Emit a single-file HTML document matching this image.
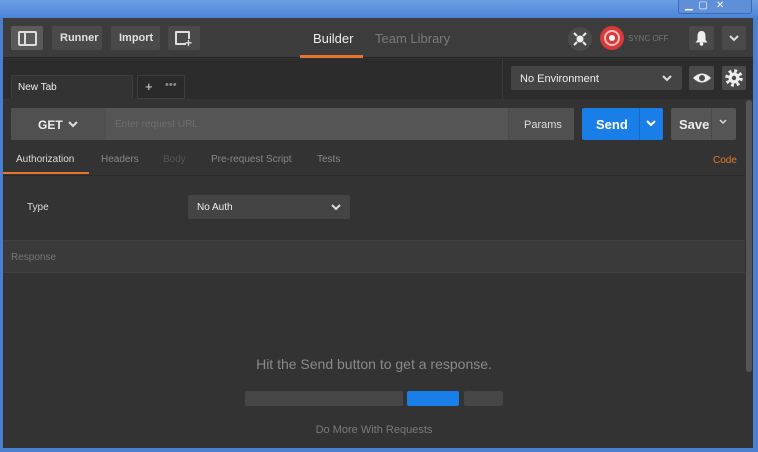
<!DOCTYPE html>
<html><head><style>
*{margin:0;padding:0;box-sizing:border-box}
body{width:758px;height:452px;overflow:hidden;background:#4a7fd0;font-family:"Liberation Sans",sans-serif;position:relative}
.a{position:absolute}
.t{color:#d0d0d0;font-size:11px}
.btn{background:#4a4a4a;border-radius:2px}
</style></head><body>
<div class="a" style="left:0;top:0;width:758px;height:18px;background:linear-gradient(#6d9fe6,#4c84d6)"></div>
<div class="a" style="left:678px;top:0;width:74px;height:14px;background:#5f8fd8;border:1px solid #3b6ab8;border-top:none;border-radius:0 0 3px 3px"></div>
<div class="a t" style="left:685px;top:0;font-size:10px;color:#fff">▁ &nbsp;▢ &nbsp; ✕</div>
<div class="a" style="left:3px;top:18px;width:750px;height:430px;background:#333"></div>
<!-- header -->
<div class="a" style="left:3px;top:18px;width:750px;height:40px;background:#3c3c3c;border-bottom:1px solid #262626"></div>
<div class="a" style="left:11px;top:26px;width:32px;height:24px;background:#5a5a5a;border-radius:2px"></div>
<div class="a" style="left:18px;top:31px;width:19px;height:15px;border:2px solid #ddd;border-radius:2px"></div>
<div class="a" style="left:24px;top:31px;width:2px;height:15px;background:#ddd"></div>
<div class="a btn" style="left:52px;top:26px;width:50px;height:24px"></div>
<div class="a t" style="left:60px;top:32px;font-weight:bold;color:#e0e0e0">Runner</div>
<div class="a btn" style="left:111px;top:26px;width:49px;height:24px"></div>
<div class="a t" style="left:119px;top:32px;font-weight:bold;color:#e0e0e0">Import</div>
<div class="a btn" style="left:168px;top:26px;width:32px;height:24px"></div>
<div class="a" style="left:175px;top:31px;width:15px;height:14px;border:2px solid #ddd;border-radius:1px"></div>
<div class="a" style="left:186px;top:39px;width:8px;height:10px;background:#4a4a4a"></div>
<div class="a t" style="left:185px;top:36px;font-size:12px;font-weight:bold;color:#ddd">+</div>
<div class="a" style="left:313px;top:31px;font-size:13px;color:#eee">Builder</div>
<div class="a" style="left:300px;top:55px;width:63px;height:3px;background:#e8732c"></div>
<div class="a" style="left:375px;top:31px;font-size:13px;color:#7a7a7a">Team Library</div>
<div class="a" style="left:568px;top:27px;width:24px;height:24px;border-radius:50%;background:#4a4a4a"></div>
<svg class="a" style="left:568px;top:27px" width="24" height="24"><circle cx="12" cy="12" r="3.5" fill="#eee"/><path d="M6 6l3 3M18 6l-3 3M6 18l3-3M18 18l-3-3" stroke="#eee" stroke-width="2"/></svg>
<div class="a" style="left:600px;top:26px;width:24px;height:24px;border-radius:50%;background:#d63a3a"></div>
<div class="a" style="left:604px;top:30px;width:16px;height:16px;border-radius:50%;border:2px solid #fbb"></div>
<div class="a" style="left:609px;top:35px;width:6px;height:6px;border-radius:50%;background:#fff"></div>
<div class="a" style="left:628px;top:34px;font-size:8px;color:#777">SYNC OFF</div>
<div class="a btn" style="left:689px;top:26px;width:25px;height:24px"></div>
<svg class="a" style="left:694px;top:30px" width="15" height="16"><path d="M7.5 1C4 1 3.5 4 3.5 7L3.5 10L1.5 12.5L13.5 12.5L11.5 10L11.5 7C11.5 4 11 1 7.5 1Z" fill="#eee"/><circle cx="7.5" cy="14" r="1.8" fill="#eee"/></svg>
<div class="a btn" style="left:722px;top:26px;width:24px;height:24px"></div>
<svg class="a" style="left:728px;top:34px" width="12" height="8"><path d="M2 2l4 4 4-4" stroke="#ddd" stroke-width="2" fill="none"/></svg>
<!-- tab row -->
<div class="a" style="left:3px;top:59px;width:750px;height:40px;background:#2c2c2c"></div>
<div class="a" style="left:11px;top:75px;width:122px;height:24px;background:#333;border:1px solid #3d3d3d;border-bottom:none"></div>
<div class="a t" style="left:18px;top:82px;font-size:10px;color:#eee">New Tab</div>
<div class="a" style="left:137px;top:75px;width:48px;height:24px;background:#2a2a2a;border:1px solid #3d3d3d"></div>
<div class="a t" style="left:145px;top:79px;font-size:13px;color:#ddd">+</div>
<div class="a t" style="left:165px;top:79px;font-size:11px;color:#888">•••</div>
<div class="a" style="left:502px;top:59px;width:1px;height:40px;background:#3a3a3a"></div>
<div class="a btn" style="left:511px;top:66px;width:171px;height:24px;background:#444"></div>
<div class="a t" style="left:520px;top:73px;color:#eee">No Environment</div>
<svg class="a" style="left:661px;top:74px" width="12" height="8"><path d="M2 2l4 4 4-4" stroke="#ddd" stroke-width="2" fill="none"/></svg>
<div class="a btn" style="left:689px;top:66px;width:25px;height:24px"></div>
<svg class="a" style="left:692px;top:71px" width="20" height="14"><path d="M1 7Q10 -2 19 7Q10 16 1 7Z" fill="#eee"/><circle cx="10" cy="7" r="3" fill="#4a4a4a"/></svg>
<div class="a btn" style="left:722px;top:66px;width:24px;height:24px"></div>
<svg class="a" style="left:724px;top:68px" width="20" height="20"><circle cx="10" cy="10" r="7" fill="none" stroke="#eee" stroke-width="3.5" stroke-dasharray="2.75 2.75"/><circle cx="10" cy="10" r="5.5" fill="#eee"/><circle cx="10" cy="10" r="2.2" fill="#4a4a4a"/></svg>
<!-- url row -->
<div class="a" style="left:11px;top:108px;width:563px;height:32px;background:#555;border-radius:2px"></div>
<div class="a" style="left:11px;top:108px;width:95px;height:32px;background:#505050"></div>
<div class="a" style="left:38px;top:118px;font-size:12px;font-weight:bold;color:#eee">GET</div>
<svg class="a" style="left:67px;top:120px" width="12" height="8"><path d="M2 2l4 4 4-4" stroke="#ddd" stroke-width="2" fill="none"/></svg>
<div class="a" style="left:115px;top:119px;font-size:10px;color:#6e6e6e">Enter request URL</div>
<div class="a" style="left:508px;top:108px;width:66px;height:32px;background:#505050;border-left:1px solid #4a4a4a"></div>
<div class="a t" style="left:524px;top:119px;color:#ddd">Params</div>
<div class="a" style="left:582px;top:108px;width:81px;height:32px;background:#1a7ee8;border-radius:2px"></div>
<div class="a" style="left:596px;top:117px;font-size:13px;font-weight:bold;color:#fff">Send</div>
<div class="a" style="left:639px;top:108px;width:1px;height:32px;background:#1667c0"></div>
<svg class="a" style="left:645px;top:119px" width="12" height="8"><path d="M2 2l4 4 4-4" stroke="#fff" stroke-width="2" fill="none"/></svg>
<div class="a" style="left:671px;top:108px;width:65px;height:32px;background:#555;border-radius:2px"></div>
<div class="a" style="left:679px;top:117px;font-size:13px;font-weight:bold;color:#eee">Save</div>
<div class="a" style="left:711px;top:108px;width:1px;height:32px;background:#4a4a4a"></div>
<svg class="a" style="left:718px;top:118px" width="10" height="7"><path d="M2 2l3 3 3-3" stroke="#ddd" stroke-width="1.5" fill="none"/></svg>
<!-- tabs -->
<div class="a" style="left:16px;top:154px;font-size:10px;color:#ddd">Authorization</div>
<div class="a" style="left:3px;top:172px;width:86px;height:2px;background:#e8732c"></div>
<div class="a" style="left:101px;top:154px;font-size:10px;color:#888">Headers</div>
<div class="a" style="left:163px;top:154px;font-size:10px;color:#555">Body</div>
<div class="a" style="left:211px;top:154px;font-size:10px;color:#888">Pre-request Script</div>
<div class="a" style="left:317px;top:154px;font-size:10px;color:#888">Tests</div>
<div class="a" style="left:713px;top:155px;font-size:10px;color:#e07b2c">Code</div>
<div class="a" style="left:3px;top:175px;width:742px;height:1px;background:#2a2a2a"></div>
<div class="a t" style="left:27px;top:202px;font-size:10px;color:#ddd">Type</div>
<div class="a" style="left:188px;top:195px;width:162px;height:24px;background:#444;border-radius:2px"></div>
<div class="a t" style="left:197px;top:202px;font-size:10px;color:#eee">No Auth</div>
<svg class="a" style="left:330px;top:203px" width="12" height="8"><path d="M2 2l4 4 4-4" stroke="#ddd" stroke-width="2" fill="none"/></svg>
<!-- response -->
<div class="a" style="left:3px;top:240px;width:742px;height:33px;background:#3a3a3a;border-top:1px solid #404040;border-bottom:1px solid #404040"></div>
<div class="a" style="left:11px;top:252px;font-size:10px;color:#777">Response</div>
<div class="a" style="left:0;top:356px;width:748px;text-align:center;font-size:14px;color:#8a8a8a">Hit the Send button to get a response.</div>
<div class="a" style="left:245px;top:391px;width:158px;height:15px;background:#464646;border-radius:2px"></div>
<div class="a" style="left:407px;top:391px;width:52px;height:15px;background:#1a7ee8;border-radius:2px"></div>
<div class="a" style="left:464px;top:391px;width:39px;height:15px;background:#464646;border-radius:2px"></div>
<div class="a" style="left:0;top:424px;width:748px;text-align:center;font-size:11px;color:#7a7a7a">Do More With Requests</div>
<!-- scrollbar -->
<div class="a" style="left:746px;top:100px;width:6px;height:272px;background:#555;border-radius:3px"></div>
</body></html>
